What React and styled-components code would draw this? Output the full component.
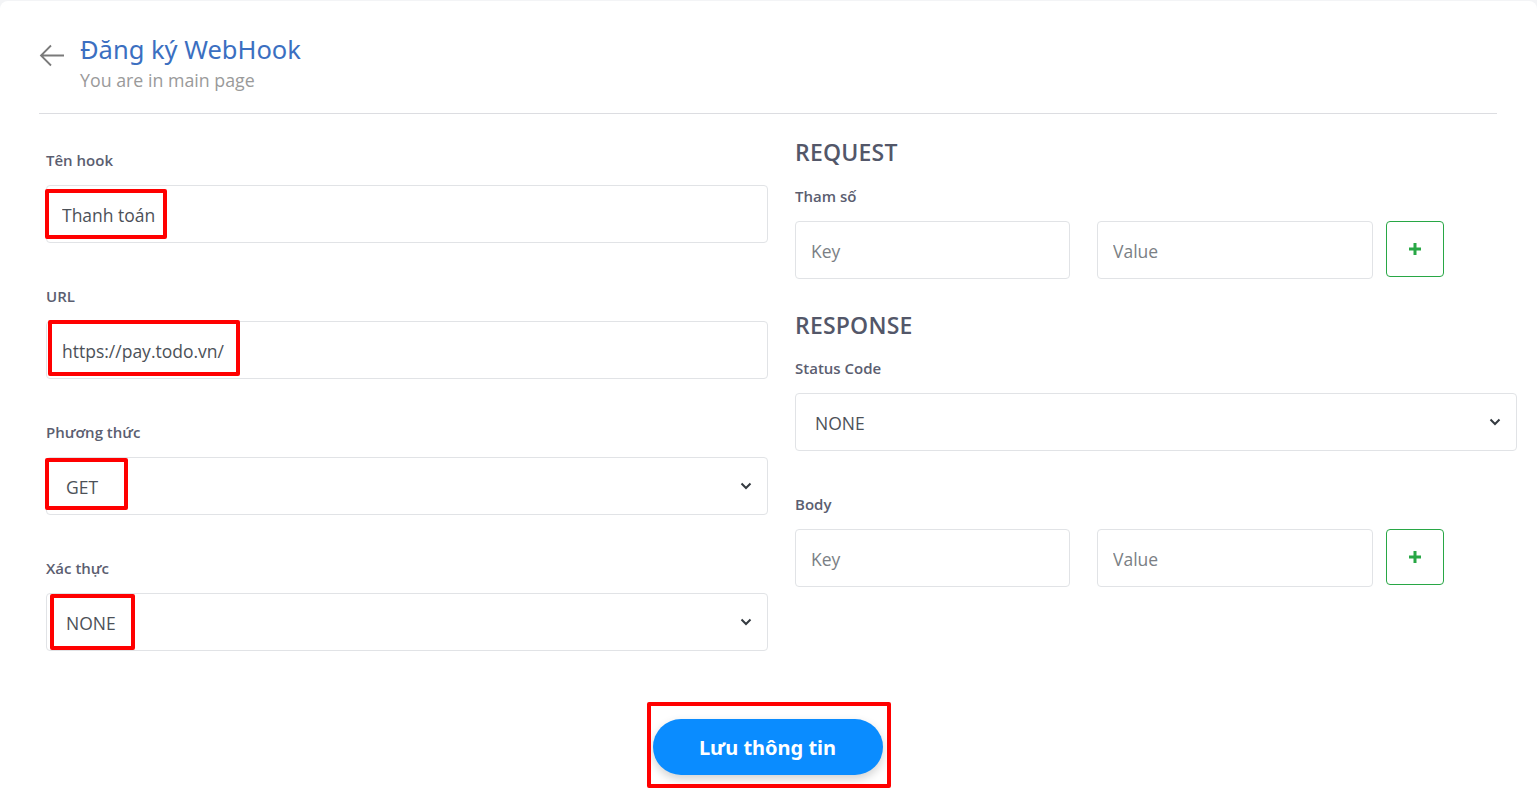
import React from 'react'
import styled, { createGlobalStyle } from 'styled-components'

const GlobalStyle = createGlobalStyle`
  * { box-sizing: border-box; }
  body {
    margin: 0;
    background: #f3f4f6;
    font-family: "Open Sans", "Noto Sans", sans-serif;
  }
`

const Card = styled.div`
  margin-top: 1px;
  min-height: 810px;
  background: #fff;
  border-radius: 8px 8px 0 0;
  padding: 0 20px 0 46px;
`

const Header = styled.div`
  display: flex;
  align-items: flex-start;
  gap: 14px;
  margin-left: -7px;
  padding-top: 32px;
  padding-bottom: 21px;
  border-bottom: 1px solid #dcdde1;
  margin-right: 20px;
`

const Back = styled.button`
  border: none;
  background: none;
  padding: 0;
  margin-top: 9px;
  width: 27px;
  height: 27px;
  color: #7a7a7a;
  cursor: pointer;
`

const Titles = styled.div`
  display: flex;
  flex-direction: column;
`

const Title = styled.h1`
  margin: 0;
  font-family: "Noto Sans", "Open Sans", sans-serif;
  font-size: 25.5px;
  font-weight: 400;
  line-height: 32px;
  color: #3b6fc1;
`

const Subtitle = styled.div`
  font-size: 17.8px;
  line-height: 24px;
  color: #9a9a9a;
  margin-top: 3px;
`

const Form = styled.div`
  display: grid;
  grid-template-columns: 722px 722px;
  column-gap: 27px;
  margin-top: 23px;
`

const Column = styled.div`
  display: flex;
  flex-direction: column;
`

const Field = styled.div`
  margin-top: ${p => p.$top || 0}px;
`

const Label = styled.div`
  font-size: 15px;
  font-weight: 600;
  line-height: 20px;
  color: #5b5e70;
  margin-bottom: 15px;
`

const Heading = styled.h2`
  margin: ${p => p.$top ?? -1}px 0 ${p => p.$bottom ?? 18}px;
  font-size: 23px;
  font-weight: 600;
  line-height: 32px;
  color: #535769;
  letter-spacing: 0.2px;
`

const Holder = styled.div`
  position: relative;
`

const Input = styled.input`
  display: block;
  width: 100%;
  height: 58px;
  border: 1px solid #e1e3e6;
  border-radius: 4px;
  padding: 1px 15px 0;
  font-family: inherit;
  font-size: 17.5px;
  color: #4c5158;
  background: #fff;
  outline: none;
  &::placeholder { color: #7b7f85; }
`

const Select = styled.select`
  display: block;
  width: 100%;
  height: 58px;
  border: 1px solid #e1e3e6;
  border-radius: 4px;
  padding: 1px 19px 0;
  font-family: inherit;
  font-size: 17.5px;
  color: #4c5158;
  background: #fff url("data:image/svg+xml,%3Csvg xmlns='http://www.w3.org/2000/svg' width='12' height='8' viewBox='0 0 12 8'%3E%3Cpath d='M1.5 1.5l4.5 4.5 4.5-4.5' fill='none' stroke='%23343a40' stroke-width='2'/%3E%3C/svg%3E") no-repeat right 15px center;
  appearance: none;
  outline: none;
`

const Mark = styled.span`
  position: absolute;
  border: 4px solid #ff0000;
  border-radius: 2px;
  pointer-events: none;
`

const Pair = styled.div`
  display: grid;
  grid-template-columns: 275px 276px 58px;
  column-gap: 27px;
  align-items: start;
  & > :last-child { margin-left: -14px; }
`

const AddButton = styled.button`
  width: 58px;
  height: 56px;
  border: 1px solid #28a745;
  border-radius: 4px;
  background: #fff;
  color: #28a745;
  display: flex;
  align-items: center;
  justify-content: center;
  cursor: pointer;
`

const Footer = styled.div`
  display: flex;
  justify-content: center;
  margin: 68px 0 0 -28px;
`

const SaveButton = styled.button`
  width: 230px;
  height: 56px;
  border: none;
  border-radius: 28px;
  background: #0a8cff;
  color: #fff;
  font-family: "Noto Sans", "Open Sans", sans-serif;
  font-size: 20px;
  font-weight: 700;
  box-shadow: 0 4px 10px rgba(0, 0, 0, 0.18);
  cursor: pointer;
`

const Plus = () => (
  <svg width="14" height="14" viewBox="0 0 14 14">
    <path d="M7 1v12M1 7h12" stroke="currentColor" strokeWidth="3" />
  </svg>
)

const KeyValue = () => (
  <Pair>
    <Input placeholder="Key" />
    <Input placeholder="Value" />
    <AddButton><Plus /></AddButton>
  </Pair>
)

export default function App() {
  return (
    <>
      <GlobalStyle />
      <Card>
        <Header>
          <Back>
            <svg width="27" height="27" viewBox="0 0 27 27" fill="none" stroke="currentColor" strokeWidth="1.8">
              <path d="M2 13.5h23M12 3.5l-10 10 10 10" />
            </svg>
          </Back>
          <Titles>
            <Title>Đăng ký WebHook</Title>
            <Subtitle>You are in main page</Subtitle>
          </Titles>
        </Header>

        <Form>
          <Column>
            <Field $top={13}>
              <Label>Tên hook</Label>
              <Holder>
                <Input defaultValue="Thanh toán" />
                <Mark style={{ left: -1, top: 4, width: 122, height: 50 }} />
              </Holder>
            </Field>
            <Field $top={43}>
              <Label>URL</Label>
              <Holder>
                <Input defaultValue="https://pay.todo.vn/" />
                <Mark style={{ left: 2, top: -1, width: 192, height: 56 }} />
              </Holder>
            </Field>
            <Field $top={43}>
              <Label>Phương thức</Label>
              <Holder>
                <Select defaultValue="GET">
                  <option>GET</option>
                  <option>POST</option>
                  <option>PUT</option>
                  <option>DELETE</option>
                </Select>
                <Mark style={{ left: -1, top: 1, width: 83, height: 52 }} />
              </Holder>
            </Field>
            <Field $top={43}>
              <Label>Xác thực</Label>
              <Holder>
                <Select defaultValue="NONE">
                  <option>NONE</option>
                  <option>BASIC</option>
                  <option>BEARER</option>
                </Select>
                <Mark style={{ left: 4, top: 1, width: 85, height: 56 }} />
              </Holder>
            </Field>
          </Column>

          <Column>
            <Heading>REQUEST</Heading>
            <Label>Tham số</Label>
            <KeyValue />
            <Heading $top={30} $bottom={17}>RESPONSE</Heading>
            <Label>Status Code</Label>
            <Select defaultValue="NONE">
              <option>NONE</option>
              <option>200</option>
              <option>400</option>
              <option>500</option>
            </Select>
            <Field $top={43}>
              <Label>Body</Label>
              <KeyValue />
            </Field>
          </Column>
        </Form>

        <Footer>
          <Holder>
            <SaveButton>Lưu thông tin</SaveButton>
            <Mark style={{ left: -6, top: -17, width: 244, height: 86 }} />
          </Holder>
        </Footer>
      </Card>
    </>
  )
}
